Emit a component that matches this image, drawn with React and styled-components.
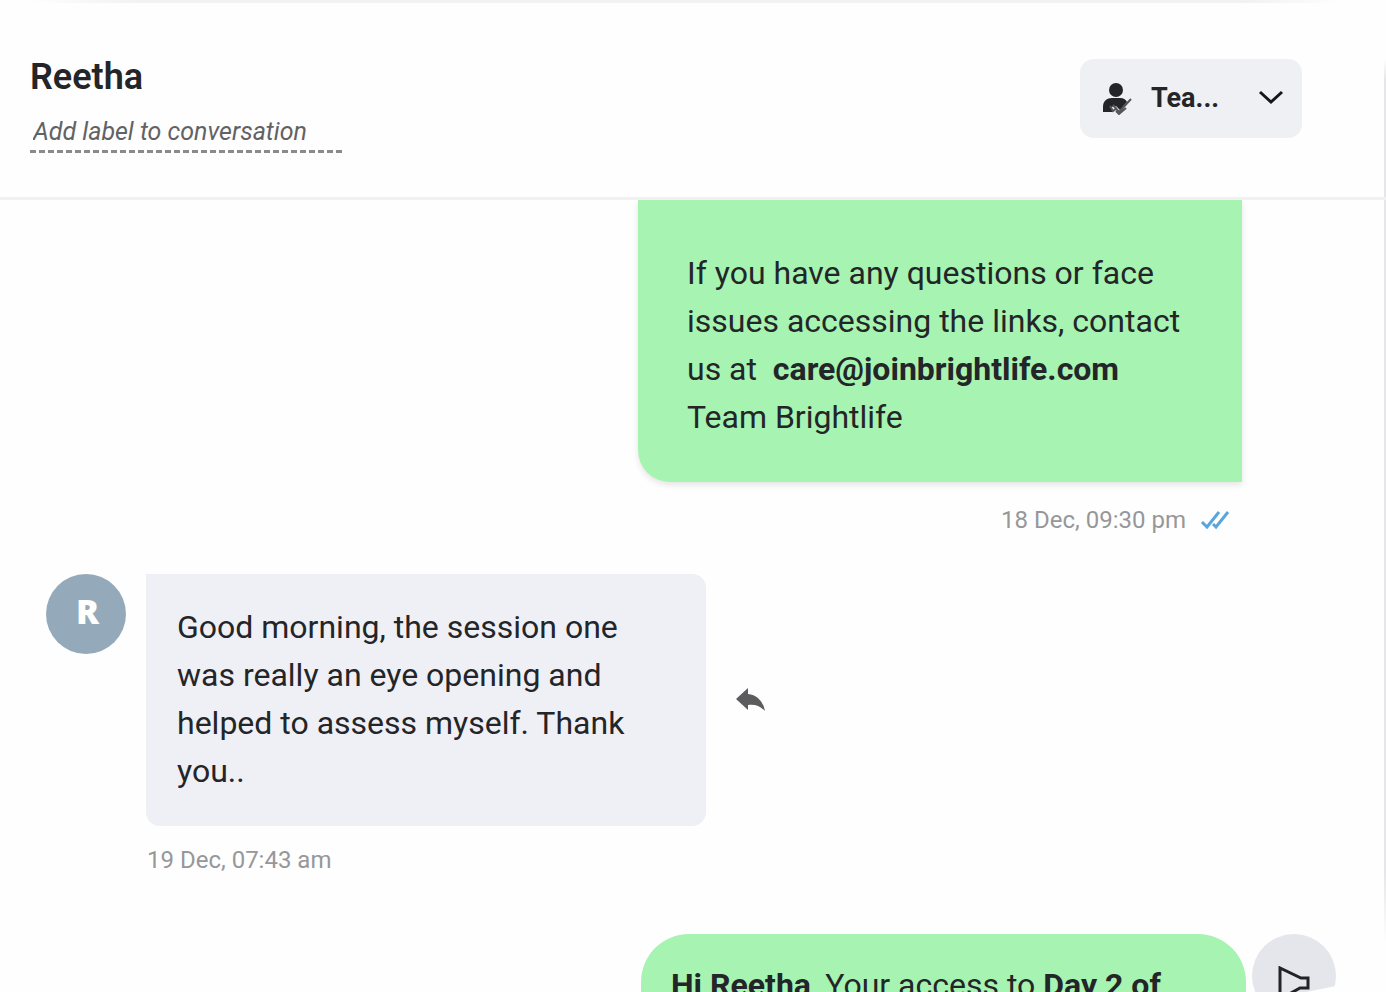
import React from 'react'
import styled, { createGlobalStyle } from 'styled-components'

const App = () => {
  return (
    <>
      <GlobalStyle />
      <Panel>
        <Header>
          <Contact>
            <h1>Reetha</h1>
            <LabelInput
              aria-label='Add label to conversation'
              placeholder='Add label to conversation'
            />
          </Contact>
          <AssignButton type='button'>
            <AssignIcon />
            <span>Tea...</span>
            <ChevronIcon />
          </AssignButton>
        </Header>
        <Thread>
          <Message $sent>
            <SentBubble>
              If you have any questions or face issues accessing the links,
              contact us at &nbsp;<strong>care@joinbrightlife.com</strong>
              <br />
              Team Brightlife
            </SentBubble>
            <Meta>
              18 Dec, 09:30 pm
              <TicksIcon />
            </Meta>
          </Message>
          <Message>
            <ReceivedRow>
              <Avatar>R</Avatar>
              <ReceivedBubble>
                Good morning, the session one was really an eye opening and
                helped to assess myself. Thank you..
              </ReceivedBubble>
              <ReplyButton type='button' aria-label='Reply'>
                <ReplyIcon />
              </ReplyButton>
            </ReceivedRow>
            <Meta $received>19 Dec, 07:43 am</Meta>
          </Message>
          <CampaignRow>
            <CampaignBubble>
              <strong>Hi Reetha</strong>, Your access to <strong>Day 2 of</strong>
            </CampaignBubble>
            <CampaignBadge>
              <MegaphoneIcon />
            </CampaignBadge>
          </CampaignRow>
        </Thread>
      </Panel>
    </>
  )
}

const AssignIcon = () => (
  <svg width='32' height='34' viewBox='0 0 32 34' fill='none' aria-hidden='true'>
    <circle cx='15' cy='9' r='7' fill='#242528' />
    <path d='M2 31v-5c0-6 4-9 9-9h8c4 0 6 2 7 4l-7 8-4-4-5 1 2 5z' fill='#242528' />
    <path d='M9 25l3 5 4-3m-4-3l6 7 12-13M15 30l3 3 7-6' stroke='#55565a' strokeWidth='2' />
  </svg>
)

const ChevronIcon = () => (
  <svg width='26' height='16' viewBox='0 0 26 16' fill='none' aria-hidden='true'>
    <path d='M2 2l11 10 11-10' stroke='#151619' strokeWidth='3' />
  </svg>
)

const TicksIcon = () => (
  <svg width='30' height='22' viewBox='0 0 30 22' fill='none' aria-hidden='true'>
    <path d='M2 13l5 5L19 3M13 15l3 3L28 3' stroke='#5aa5dc' strokeWidth='3' />
  </svg>
)

const ReplyIcon = () => (
  <svg width='30' height='26' viewBox='0 0 30 26' aria-hidden='true'>
    <path d='M12 1v6c9 1 15 7 17 17-5-5-10-7-17-6v5L0 12z' fill='#5c5c5e' />
  </svg>
)

const MegaphoneIcon = () => (
  <svg width='36' height='40' viewBox='0 0 36 40' fill='none' aria-hidden='true'>
    <path d='M4 2v34l11-9 9-5h8V12h-7z' stroke='#222328' strokeWidth='3' />
  </svg>
)

const GlobalStyle = createGlobalStyle`
* {
    box-sizing: border-box;
}
body {
    margin: 0;
    background: #fefefe;
    color: #242528;
    font-family: Roboto, sans-serif;
}
h1, p {
    margin: 0;
}
button {
    border: none;
    padding: 0;
    color: inherit;
    font-family: inherit;
    cursor: pointer;
}
svg {
    display: block;
    flex-shrink: 0;
}
`

const Panel = styled.main`
display: flex;
flex-direction: column;
height: 100vh;
overflow: hidden;
background:
    linear-gradient(90deg, transparent 2%, #f2f2f3 10%, #f2f2f3 90%, transparent 97%) top / 100% 3px no-repeat,
    linear-gradient(transparent 6%, #e6e6e8 8%, #e6e6e8 88%, transparent 95%) right / 2px 100% no-repeat,
    #fefefe;
`

const Header = styled.header`
display: flex;
justify-content: space-between;
align-items: flex-start;
flex-shrink: 0;
height: 200px;
padding: 57px 84px 0 30px;
border-bottom: 3px solid #f1f1f2;
`

const Contact = styled.div`
h1 {
    font-size: 36px;
    line-height: 40px;
    font-weight: 600;
}
`

const LabelInput = styled.input`
display: block;
width: 312px;
height: 37px;
margin-top: 19px;
padding: 0 3px 4px;
border: none;
border-bottom: 3px dashed #8a8a8d;
outline: none;
background: none;
font: italic 25px/28px Roboto, sans-serif;
&::placeholder {
    color: #626264;
    opacity: 1;
}
`

const AssignButton = styled.button`
display: flex;
align-items: center;
width: 222px;
height: 79px;
margin-top: 2px;
padding: 0 18px 2px 21px;
border-radius: 14px;
background: #eff0f4;
font-size: 27px;
font-weight: 700;
span {
    flex: 1;
    margin-left: 18px;
    text-align: left;
}
`

const Thread = styled.section`
flex: 1;
min-height: 0;
overflow: hidden;
`

const Message = styled.article`
display: flex;
flex-direction: column;
align-items: ${({ $sent }) => ($sent ? 'flex-end' : 'flex-start')};
padding: ${({ $sent }) => ($sent ? '0 144px 0 0' : '0 0 0 46px')};
margin-bottom: ${({ $sent }) => ($sent ? '36px' : '56px')};
`

const Bubble = styled.p`
font-size: 32px;
line-height: 48px;
strong {
    font-weight: 700;
}
`

const SentBubble = styled(Bubble)`
width: 604px;
padding: 49px 47px 41px 49px;
border-radius: 0 0 0 32px;
background: #a6f3b2;
box-shadow: 0 3px 6px rgba(0, 0, 0, .1);
`

const ReceivedRow = styled.div`
display: flex;
align-items: flex-start;
`

const ReceivedBubble = styled(Bubble)`
width: 560px;
margin-left: 20px;
padding: 29px 29px 31px 31px;
border-radius: 0 14px 14px 14px;
background: #eff0f5;
`

const Avatar = styled.div`
display: flex;
align-items: center;
justify-content: center;
width: 80px;
height: 80px;
padding: 0 0 6px 3px;
border-radius: 50%;
background: #94aaba;
color: #fff;
font: 800 34px 'Open Sans', sans-serif;
`

const ReplyButton = styled.button`
align-self: center;
margin-left: 30px;
background: none;
`

const Meta = styled.div`
display: flex;
align-items: center;
gap: 14px;
height: 36px;
margin: ${({ $received }) => ($received ? '16px 0 0 101px' : '20px 12px 0 0')};
color: #97979a;
font-size: 24px;
`

const CampaignRow = styled.article`
display: flex;
justify-content: flex-end;
gap: 6px;
padding-right: 50px;
`

const CampaignBubble = styled(Bubble)`
width: 605px;
padding: 27px 30px 41px;
border-radius: 48px 48px 0 32px;
background: #a6f3b2;
`

const CampaignBadge = styled.div`
display: flex;
justify-content: center;
width: 84px;
height: 84px;
padding-top: 32px;
border-radius: 50%;
background: #e5e6eb;
clip-path: polygon(0 0, 100% 0, 100% 62%, 40% 74%, 0 74%);
`

export default App
